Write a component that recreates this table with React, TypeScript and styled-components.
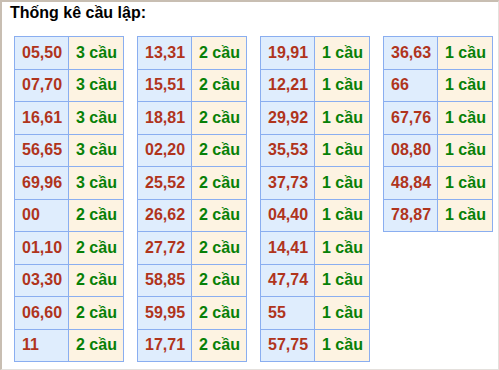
import styled, { createGlobalStyle } from "styled-components";

const GlobalStyle = createGlobalStyle`
  html, body {
    margin: 0;
    padding: 0;
    background: #ffffff;
  }
`;

const Frame = styled.div`
  box-sizing: border-box;
  width: 499px;
  height: 370px;
  border-left: 2px solid #c8beb2;
  border-top: 2px solid #c8beb2;
  border-right: 1px solid #e4e0dc;
  border-bottom: 1px solid #e4e0dc;
  padding: 1px 0 0 8px;
  font-family: "Liberation Sans", Arial, sans-serif;
  overflow: hidden;
`;

const Title = styled.h3`
  margin: 0;
  font-size: 16px;
  font-weight: bold;
  color: #000;
  line-height: 19px;
`;

const Columns = styled.div`
  display: flex;
  align-items: flex-start;
  gap: 13px;
  margin-top: 14px;
  padding-left: 4px;
`;

const Table = styled.table`
  border-collapse: collapse;
  border: 1px solid #8aaef0;
`;

const Cell = styled.td<{ $kind: "num" | "count" }>`
  box-sizing: border-box;
  height: 32.5px;
  width: ${(p) => (p.$kind === "num" ? "54px" : "55px")};
  padding: 0 0 0 7px;
  border: 1px solid #8aaef0;
  background: ${(p) => (p.$kind === "num" ? "#dfedfd" : "#fdf3e2")};
  color: ${(p) => (p.$kind === "num" ? "#b0341c" : "#078007")};
  font-size: 16px;
  font-weight: bold;
  text-align: left;
  vertical-align: middle;
  white-space: nowrap;
`;

const data: [string, number][][] = [
  [
    ["05,50", 3], ["07,70", 3], ["16,61", 3], ["56,65", 3], ["69,96", 3],
    ["00", 2], ["01,10", 2], ["03,30", 2], ["06,60", 2], ["11", 2],
  ],
  [
    ["13,31", 2], ["15,51", 2], ["18,81", 2], ["02,20", 2], ["25,52", 2],
    ["26,62", 2], ["27,72", 2], ["58,85", 2], ["59,95", 2], ["17,71", 2],
  ],
  [
    ["19,91", 1], ["12,21", 1], ["29,92", 1], ["35,53", 1], ["37,73", 1],
    ["04,40", 1], ["14,41", 1], ["47,74", 1], ["55", 1], ["57,75", 1],
  ],
  [
    ["36,63", 1], ["66", 1], ["67,76", 1], ["08,80", 1], ["48,84", 1], ["78,87", 1],
  ],
];

export default function App() {
  return (
    <>
      <GlobalStyle />
      <Frame>
        <Title>Thống kê cầu lập:</Title>
        <Columns>
          {data.map((col, i) => (
            <Table key={i}>
              <tbody>
                {col.map(([pair, n]) => (
                  <tr key={pair}>
                    <Cell $kind="num">{pair}</Cell>
                    <Cell $kind="count">{n} cầu</Cell>
                  </tr>
                ))}
              </tbody>
            </Table>
          ))}
        </Columns>
      </Frame>
    </>
  );
}
